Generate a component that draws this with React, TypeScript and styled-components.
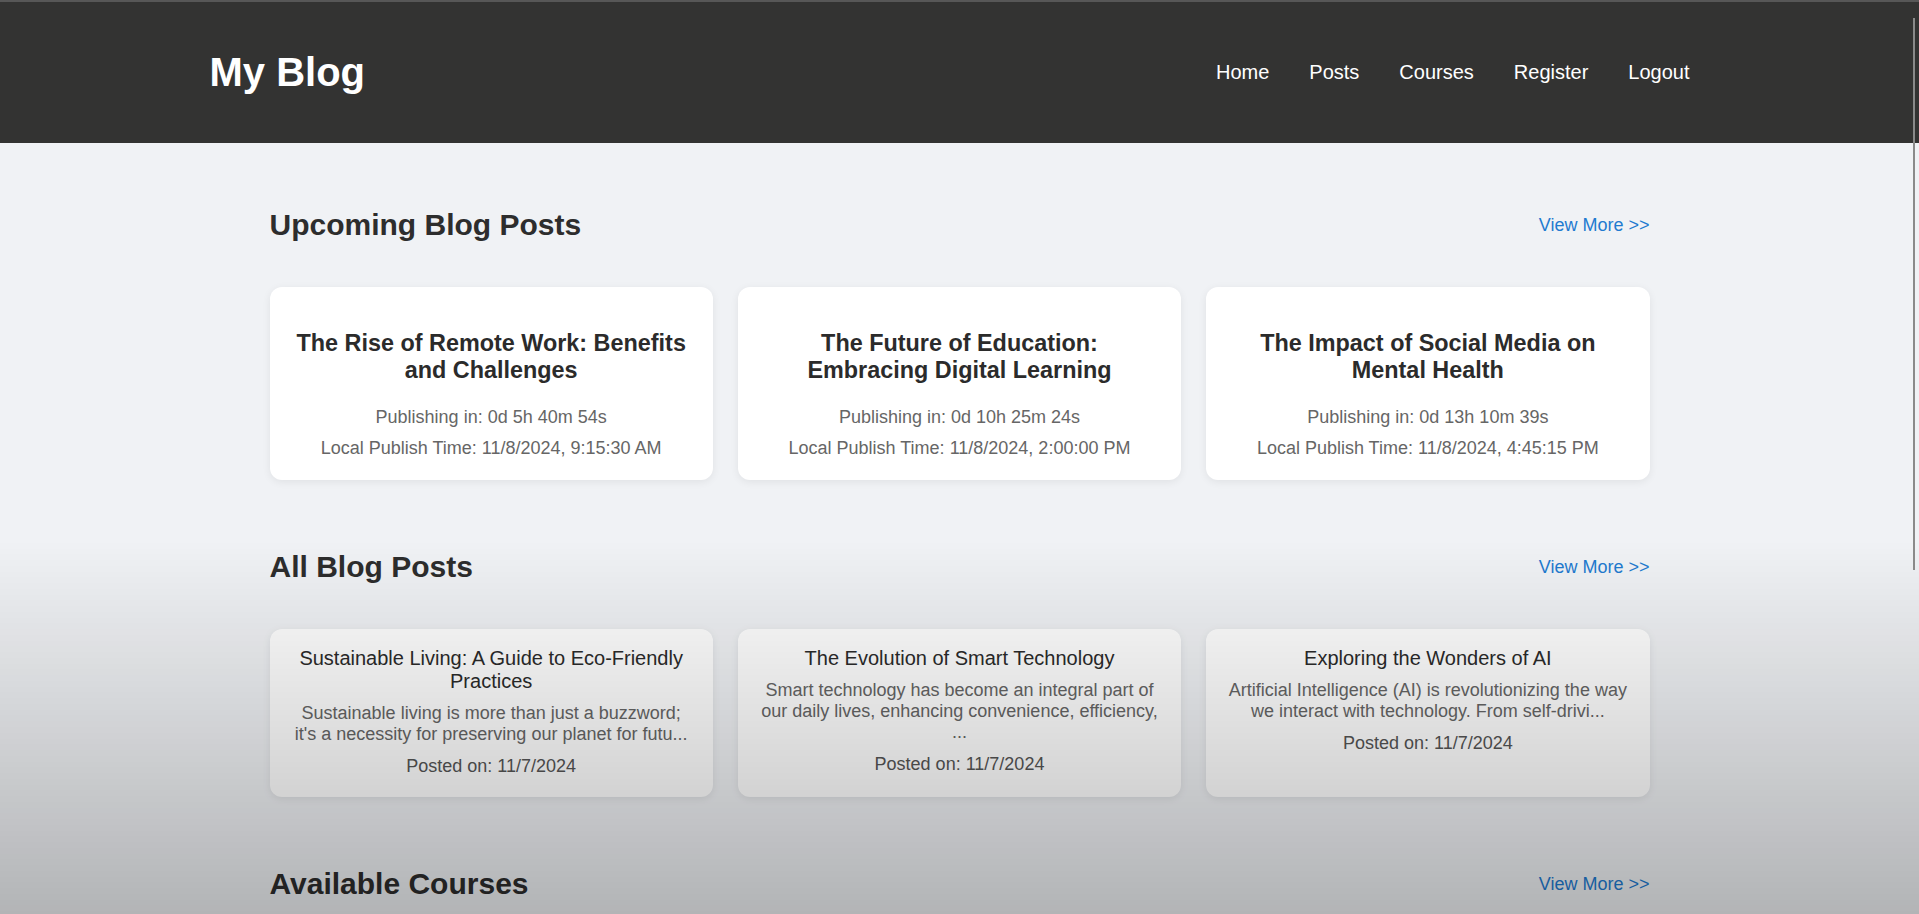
import React from "react";
import styled, { createGlobalStyle } from "styled-components";

const GlobalStyle = createGlobalStyle`
  html { scrollbar-width: none; }
  html::-webkit-scrollbar { display: none; }
  body {
    margin: 0;
    background: #f0f2f5;
    font-family: "Liberation Sans", Arial, sans-serif;
    color: #333;
  }
`;

const Header = styled.header`
  background: #333332;
  border-top: 2px solid #575757;
  height: 141px;
  display: flex;
  align-items: center;
`;

const HeaderInner = styled.div`
  width: 100%;
  max-width: 1500px;
  margin: 0 auto;
  display: flex;
  align-items: center;
  justify-content: space-between;
`;

const Logo = styled.h1`
  margin: 0;
  font-size: 40px;
  font-weight: 700;
  color: #ffffff;
`;

const Nav = styled.nav`
  display: flex;
  align-items: center;
`;

const NavLink = styled.a`
  color: #ffffff;
  font-size: 20px;
  text-decoration: none;
  padding: 0 20px;
`;

const Main = styled.main`
  max-width: 1380px;
  margin: 0 auto;
  padding: 65px 0 80px;
  display: flex;
  flex-direction: column;
  gap: 70px;
`;

const Section = styled.section`
  display: flex;
  flex-direction: column;
  gap: 45px;
`;

const SectionHead = styled.div`
  display: flex;
  align-items: center;
  justify-content: space-between;
`;

const SectionTitle = styled.h2`
  margin: 0;
  font-size: 30px;
  font-weight: 700;
  color: #2d2d2d;
`;

const ViewMore = styled.a`
  font-size: 18px;
  color: #1f7bd0;
  text-decoration: none;
`;

const Grid = styled.div`
  display: grid;
  grid-template-columns: repeat(3, 1fr);
  gap: 25px;
`;

const UpcomingCard = styled.div`
  background: #ffffff;
  border-radius: 12px;
  box-shadow: 0 2px 8px rgba(0, 0, 0, 0.07);
  padding: 43px 20px 21px;
  text-align: center;
  display: flex;
  flex-direction: column;
`;

const UpcomingTitle = styled.h3`
  margin: 0 0 23px;
  font-size: 23.4px;
  font-weight: 700;
  color: #2b2b2b;
`;

const MetaList = styled.div`
  display: flex;
  flex-direction: column;
  gap: 10px;
`;

const Meta = styled.p`
  margin: 0;
  font-size: 18px;
  color: #666;
`;

const PostCard = styled.div`
  background: #ffffff;
  border-radius: 12px;
  box-shadow: 0 2px 8px rgba(0, 0, 0, 0.08);
  padding: 18px 20px 20px;
  text-align: center;
`;

const PostTitle = styled.h3`
  margin: 0 0 10px;
  font-size: 20px;
  font-weight: 400;
  color: #2b2b2b;
`;

const Excerpt = styled.p`
  margin: 0 0 11px;
  font-size: 18px;
  color: #666;
`;

const PostedOn = styled.p`
  margin: 0;
  font-size: 18px;
  color: #555;
`;

const Shade = styled.div`
  position: fixed;
  inset: 0;
  pointer-events: none;
  background: linear-gradient(
    to bottom,
    rgba(0, 0, 0, 0) 0,
    rgba(0, 0, 0, 0) 540px,
    rgba(0, 0, 0, 0.255) 914px
  );
`;

const ScrollThumb = styled.div`
  position: fixed;
  top: 18px;
  right: 4px;
  width: 2px;
  height: 552px;
  background: #8a8a8a;
  pointer-events: none;
`;

const upcoming = [
  {
    title: "The Rise of Remote Work: Benefits and Challenges",
    countdown: "0d 5h 40m 54s",
    time: "11/8/2024, 9:15:30 AM",
  },
  {
    title: "The Future of Education: Embracing Digital Learning",
    countdown: "0d 10h 25m 24s",
    time: "11/8/2024, 2:00:00 PM",
  },
  {
    title: "The Impact of Social Media on Mental Health",
    countdown: "0d 13h 10m 39s",
    time: "11/8/2024, 4:45:15 PM",
  },
];

const posts = [
  {
    title: "Sustainable Living: A Guide to Eco-Friendly Practices",
    excerpt:
      "Sustainable living is more than just a buzzword; it's a necessity for preserving our planet for futu...",
    date: "11/7/2024",
  },
  {
    title: "The Evolution of Smart Technology",
    excerpt:
      "Smart technology has become an integral part of our daily lives, enhancing convenience, efficiency, ...",
    date: "11/7/2024",
  },
  {
    title: "Exploring the Wonders of AI",
    excerpt:
      "Artificial Intelligence (AI) is revolutionizing the way we interact with technology. From self-drivi...",
    date: "11/7/2024",
  },
];

export default function App() {
  return (
    <>
      <GlobalStyle />
      <Header>
        <HeaderInner>
          <Logo>My Blog</Logo>
          <Nav>
            <NavLink href="#">Home</NavLink>
            <NavLink href="#">Posts</NavLink>
            <NavLink href="#">Courses</NavLink>
            <NavLink href="#">Register</NavLink>
            <NavLink href="#">Logout</NavLink>
          </Nav>
        </HeaderInner>
      </Header>
      <Main>
        <Section>
          <SectionHead>
            <SectionTitle>Upcoming Blog Posts</SectionTitle>
            <ViewMore href="#">View More &gt;&gt;</ViewMore>
          </SectionHead>
          <Grid>
            {upcoming.map((u) => (
              <UpcomingCard key={u.title}>
                <UpcomingTitle>{u.title}</UpcomingTitle>
                <MetaList>
                  <Meta>Publishing in: {u.countdown}</Meta>
                  <Meta>Local Publish Time: {u.time}</Meta>
                </MetaList>
              </UpcomingCard>
            ))}
          </Grid>
        </Section>
        <Section>
          <SectionHead>
            <SectionTitle>All Blog Posts</SectionTitle>
            <ViewMore href="#">View More &gt;&gt;</ViewMore>
          </SectionHead>
          <Grid>
            {posts.map((p) => (
              <PostCard key={p.title}>
                <PostTitle>{p.title}</PostTitle>
                <Excerpt>{p.excerpt}</Excerpt>
                <PostedOn>Posted on: {p.date}</PostedOn>
              </PostCard>
            ))}
          </Grid>
        </Section>
        <Section>
          <SectionHead>
            <SectionTitle>Available Courses</SectionTitle>
            <ViewMore href="#">View More &gt;&gt;</ViewMore>
          </SectionHead>
        </Section>
      </Main>
      <Shade />
      <ScrollThumb />
    </>
  );
}
